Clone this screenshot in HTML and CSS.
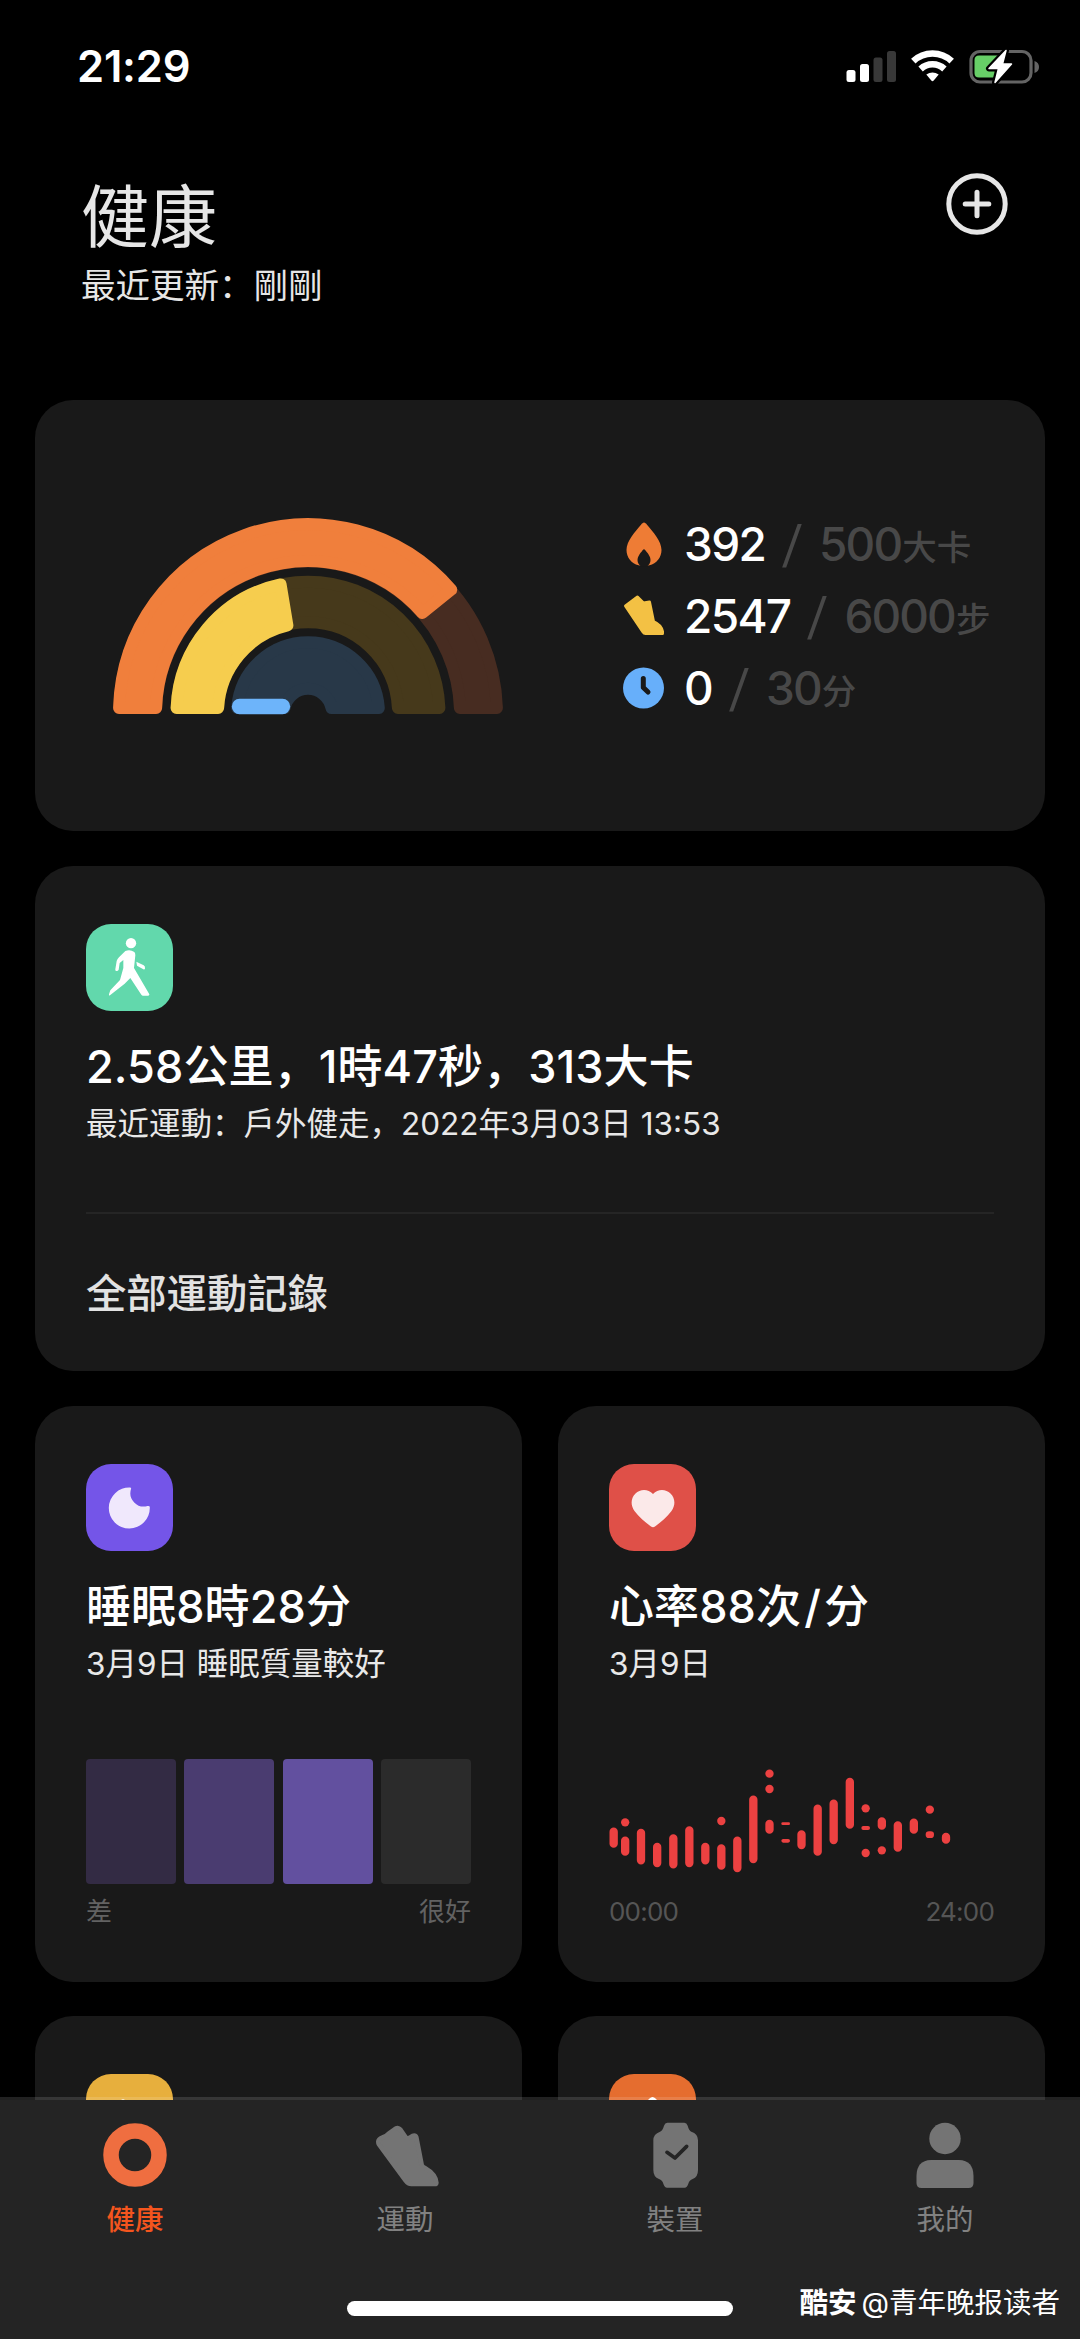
FILE: index.html
```html
<!DOCTYPE html>
<html lang="zh-Hans">
<head>
<meta charset="utf-8">
<title>健康</title>
<link rel="stylesheet" href="styles.css">
</head>
<body>
<div class="screen">
  <main class="content">
    <div class="status">
      <span class="clock">21:29</span>
      <svg class="status-icons" width="194" height="36" viewBox="0 0 194 36">
        <g fill="#fff"><rect x="0.5" y="22" width="9" height="12" rx="2.5"/><rect x="14" y="16" width="9" height="18" rx="2.5"/></g>
        <g fill="#383838"><rect x="27.5" y="9.5" width="9" height="24.500" rx="2.500"/><rect x="41" y="3" width="9" height="31" rx="2.500"/></g>
        <g fill="none" stroke="#fff" stroke-width="6.500">
          <path d="M67.300 13.200A28 28 0 0 1 105.700 13.200"/>
          <path d="M74.600 21A17.500 17.500 0 0 1 98.400 21"/>
        </g>
        <path d="M80.300 26.600Q86.500 22.600 92.700 26.600L87.700 32.600Q86.500 33.800 85.300 32.600Z" fill="#fff"/>
        <rect x="125" y="3.500" width="60" height="30.500" rx="9" fill="none" stroke="#646464" stroke-width="3.200"/>
        <path d="M188.500 13q4.500 1.500 4.500 6t-4.500 6z" fill="#646464"/>
        <path d="M133 7.500H152V29.500H133Q128.500 29.500 128.500 25V12Q128.500 7.500 133 7.500Z" fill="#67ce67"/>
        <path d="M160 2.500L143 20.500H152.500L149 34.500L165.500 16H156.500Z" fill="#fff" stroke="#000" stroke-width="6" stroke-linejoin="round"/>
        <path d="M160 2.500L143 20.500H152.500L149 34.500L165.500 16H156.500Z" fill="#fff" stroke="#fff" stroke-width="1.500" stroke-linejoin="round"/>
      </svg>
    </div>

    <header class="header">
      <div>
        <h1 class="title">健康</h1>
        <p class="updated">最近更新：剛剛</p>
      </div>
      <svg class="add" width="62" height="62" viewBox="0 0 62 62" fill="none" stroke="#e6e6e6" stroke-width="5">
        <circle cx="31" cy="31" r="28.200"/>
        <path d="M31 19.200V42.800M19.200 31H42.800" stroke-linecap="round"/>
      </svg>
    </header>

    <div class="cards">
      <section class="card goals">
        <svg class="gauge" width="392" height="198" viewBox="0 0 392 198" stroke-width="12" stroke-linejoin="round">
          <path fill="#472c21" stroke="#472c21" d="M7.100 191A189 189 0 0 1 384.900 191L347.900 191A152 152 0 0 0 44.100 191Z"/>
          <path fill="#f07f3c" stroke="#f07f3c" d="M7.100 191A189 189 0 0 1 339.200 72.700L310.400 95.950A152 152 0 0 0 44.100 191Z"/>
          <path fill="#46391b" stroke="#46391b" d="M64.600 191A131.500 131.500 0 0 1 327.400 191L285.900 191A90 90 0 0 0 106.100 191Z"/>
          <path fill="#f6cd4e" stroke="#f6cd4e" d="M64.600 191A131.500 131.500 0 0 1 168.600 67.400L175.400 108.400A90 90 0 0 0 106.100 191Z"/>
          <path fill="#283848" stroke="#283848" d="M125.200 191A71 71 0 0 1 266.800 191L219.500 191A24 24 0 0 0 172.500 191Z"/>
          <path fill="none" stroke="#6db4fa" stroke-width="15.400" stroke-linecap="round" d="M127.500 189.500H170.500"/>
        </svg>
        <ul class="stats">
          <li class="stat">
            <svg class="stat-icon" width="42" height="46" viewBox="0 0 42 46"><path fill="#ee7c35" d="M21 1.500C22 1.500 23 2.500 24 3.700C30 11 38.500 20 38.500 29C38.500 36.500 33.500 42.500 26.500 44.300C23 45 19 45 15.500 44.300C8.500 42.500 3.500 36.500 3.500 29C3.500 20 12 11 18 3.700C19 2.500 20 1.500 21 1.500Z"/><path fill="#191919" d="M21 28C24.500 31.500 27.500 35.500 27.500 39C27.500 42 26 44 24 45.500H18C16 44 14.500 42 14.500 39C14.500 35.500 17.500 31.500 21 28Z"/></svg>
            <span class="value">392</span><span class="slash">/</span><span class="goal">500</span><span class="unit">大卡</span>
          </li>
          <li class="stat">
            <svg class="stat-icon" width="42" height="46" viewBox="0 0 42 46"><path fill="#f3c144" stroke="#f3c144" stroke-width="3" stroke-linejoin="round" d="M2.500 13L14.500 4L20.500 10L26.500 9L30.500 28.500Q38.500 32 39.500 38.500V40.500H22.500Q21 40.500 20 39Z"/></svg>
            <span class="value">2547</span><span class="slash">/</span><span class="goal">6000</span><span class="unit">步</span>
          </li>
          <li class="stat">
            <svg class="stat-icon" width="42" height="46" viewBox="0 0 42 46"><circle cx="20.500" cy="23" r="20.500" fill="#67affa"/><path d="M20.300 13.500V22.500L25 27" fill="none" stroke="#191919" stroke-width="5" stroke-linecap="round" stroke-linejoin="round"/></svg>
            <span class="value">0</span><span class="slash">/</span><span class="goal">30</span><span class="unit">分</span>
          </li>
        </ul>
      </section>

      <section class="card workout">
        <div class="badge walk">
          <svg width="87" height="87" viewBox="18 26 261 261" fill="#fff">
            <circle cx="153" cy="83.500" r="15.500"/>
            <path d="M136 107Q150 101 163 110Q166 113 166 120L162 158L208 237Q209 240 205 241H189Q186 241 184 238L151 188L134 205L90 240Q86 242 87 237L91 225L120 194L130 158V134L119 143L116 163Q114 168 108 167Q105 166 106 162L110 137Q112 131 117 126Z"/>
            <path d="M169 139L191 150Q196 153 195 160Q194 163 190 162L171 151Z"/>
          </svg>
        </div>
        <h2 class="headline">2.58公里，1時47秒，313大卡</h2>
        <p class="detail">最近運動：戶外健走，2022年3月03日 13:53</p>
        <a class="all-records">全部運動記錄</a>
      </section>

      <div class="grid">
        <section class="card">
          <div class="badge sleep">
            <svg width="87" height="87" viewBox="0 0 87 87"><path fill="#f0e8fc" d="M44 23.500Q45.500 23.500 45 25A13.500 13.500 0 0 0 61.500 42Q64 41.500 63.800 43.500A20.500 20.500 0 1 1 44 23.500Z"/></svg>
          </div>
          <h2 class="headline">睡眠8時28分</h2>
          <p class="detail">3月9日 睡眠質量較好</p>
          <div class="chart levels"><i class="level poor"></i><i class="level fair"></i><i class="level good"></i><i class="level best"></i></div>
          <div class="labels"><span>差</span><span>很好</span></div>
        </section>
        <section class="card">
          <div class="badge heart">
            <svg width="87" height="87" viewBox="0 0 87 87"><path fill="#fbe9e9" d="M44 30C49 24.500 57 25 61.500 29.500C66.500 34.500 66.500 41.500 62.500 47C58 53 51.500 58.500 46 62.500Q44 64 42 62.500C36.500 58.500 30 53 25.500 47C21.500 41.500 21.500 34.500 26.500 29.500C31 25 39 24.500 44 30Z"/></svg>
          </div>
          <h2 class="headline">心率88次<span class="per">/</span>分</h2>
          <p class="detail">3月9日</p>
          <div class="chart pulse">
            <svg width="385" height="115" viewBox="57 45 1155 345" fill="#ec4141">
              <path fill="none" stroke="#ec4141" stroke-width="25" stroke-linecap="round" d="M71 245V281M105.500 272V305M153 249V331M201.500 291V339M250 265V343M298 241V339M346 291V331M394 295V347M442 272V354M490 149V327M538.500 222V239M634.500 253V285M683 176V305M731 161V270M779.500 96V224M875.500 214V227M923.500 226V293M971.500 218V239M1068 261V269"/>
              <circle cx="105.500" cy="217" r="12.500"/><circle cx="394" cy="213" r="12.500"/>
              <circle cx="538.500" cy="71" r="12.500"/><circle cx="538.500" cy="117" r="12.500"/>
              <rect x="574" y="217" width="26" height="8" rx="4"/><rect x="574" y="267" width="26" height="11" rx="5.500"/>
              <circle cx="827" cy="175" r="12.500"/><rect x="814" y="228" width="26" height="12" rx="6"/><circle cx="827" cy="309" r="12.500"/>
              <circle cx="875.500" cy="301" r="12.500"/>
              <circle cx="1019.500" cy="179" r="12.500"/><rect x="1007" y="244" width="25" height="20" rx="10"/>
            </svg>
          </div>
          <div class="labels times"><span>00:00</span><span>24:00</span></div>
        </section>
        <section class="card">
          <div class="badge steps"><svg width="87" height="87" viewBox="0 0 87 87"><path fill="#fff" d="M23 38L34 27Q37 23.500 40 27L47 35L53 34L56 48L66 60H44Z"/></svg></div>
        </section>
        <section class="card">
          <div class="badge energy"><svg width="87" height="87" viewBox="0 0 87 87"><path fill="#fff" d="M40.500 24.500Q43.500 21.500 46.500 24.500C54 32 62 40 62 48A18 18 0 0 1 26 48C26 40 33 32 40.500 24.500Z"/></svg></div>
        </section>
      </div>
    </div>
  </main>

  <nav class="tabbar">
    <div class="tabs">
      <a class="tab active">
        <svg width="68" height="68" viewBox="0 0 68 68"><circle cx="34" cy="34" r="24" fill="none" stroke="#ef6e40" stroke-width="15.500"/></svg>
        <span>健康</span>
      </a>
      <a class="tab">
        <svg width="68" height="68" viewBox="33 31 204 204"><path fill="#747474" stroke="#747474" stroke-width="14" stroke-linejoin="round" d="M55 93Q55 85 68 80Q76 79 87 68L104 56Q113 48 121 57L137 80Q143 86 151 80Q165 70 169 80L185 163Q187 168 196 173Q227 191 229 216Q229 220 224 220H154Q144 220 138 211L57 101Q55 98 55 93Z"/></svg>
        <span>運動</span>
      </a>
      <a class="tab">
        <svg width="68" height="68" viewBox="843 31 204 204"><path fill="#747474" d="M922 36H973Q980 36 983 45Q987 60 994 63Q1014 69 1014 89V178Q1014 199 998 205Q988 208 985 219Q981 231 974 231H921Q914 231 910 219Q907 208 897 205Q880 199 880 178V89Q880 70 900 63Q908 60 912 45Q915 36 922 36Z"/><path d="M921 125L945 142L980 107" fill="none" stroke="#242424" stroke-width="11" stroke-linecap="round" stroke-linejoin="round"/></svg>
        <span>裝置</span>
      </a>
      <a class="tab">
        <svg width="68" height="68" viewBox="0 0 68 68" fill="#747474"><circle cx="34" cy="17.500" r="15.700"/><path d="M20 39H48Q62.500 39.500 62.500 55V62Q62.500 67 57.500 67H10.500Q5.500 67 5.500 62V55Q5.500 39.500 20 39Z"/></svg>
        <span>我的</span>
      </a>
    </div>
    <div class="home-indicator"></div>
    <div class="watermark"><b>酷安</b><span>@青年晚报读者</span></div>
  </nav>
</div>
</body>
</html>
```
FILE: styles.css
```css
* { box-sizing: border-box; margin: 0; padding: 0; }

body {
  background: #000;
  color: #fff;
  font-family: "Inter", "Noto Sans CJK SC", sans-serif;
}

svg { display: block; flex: none; }

.screen {
  width: 1080px;
  height: 2339px;
  display: flex;
  flex-direction: column;
  overflow: hidden;
}

.content { flex: 1; min-height: 0; overflow: hidden; }

/* status bar */
.status {
  height: 132px;
  padding: 0 40px 0 77px;
  display: flex;
  align-items: center;
  justify-content: space-between;
}
.clock { font-size: 43.500px; font-weight: 600; letter-spacing: -0.200px; line-height: 50px; }

/* page header */
.header {
  height: 268px;
  padding: 41px 72px 0 81px;
  display: flex;
  justify-content: space-between;
  align-items: flex-start;
  color: #e6e6e6;
}
.title { font-size: 68px; font-weight: 400; line-height: 84px; padding-top: 2px; }
.updated { font-size: 34.500px; font-weight: 400; line-height: 44px; margin-top: 5px; }

/* cards */
.cards { padding: 0 35px; display: flex; flex-direction: column; gap: 35px; }
.card { background: #191919; border-radius: 38px; padding: 58px 51px 50px; }

.goals {
  height: 431px;
  padding: 0 0 0 77px;
  display: flex;
  align-items: center;
}
.stats { list-style: none; margin-left: 119px; }
.stat { height: 72px; display: flex; align-items: center; line-height: 72px; white-space: nowrap; }
.stat-icon { margin-right: 19px; }
.value { font-size: 46px; font-weight: 500; letter-spacing: -1.700px; }
.slash { font-size: 50px; color: #484848; width: 54px; text-align: center; transform: skewX(-5deg); }
.goal { font-size: 46px; font-weight: 500; color: #484848; letter-spacing: -1.900px; }
.unit { font-size: 34.500px; font-weight: 500; color: #484848; padding: 8px 0 0 1px; }

.badge { width: 87px; height: 87px; border-radius: 25px; overflow: hidden; }
.walk { background: #62d8ac; }
.sleep { background: #7455e8; }
.heart { background: #df5048; }
.steps { background: #e7af3d; }
.energy { background: #e56d2f; }

.headline { font-size: 45px; font-weight: 500; line-height: 56px; margin-top: 28px; white-space: nowrap; letter-spacing: 0.100px; }
.per { padding: 0 3px; }
.detail { font-size: 31.500px; line-height: 44px; height: 44px; margin-top: 7px; color: #e8e8e8; white-space: nowrap; }
.all-records {
  display: block;
  margin-top: 66px;
  padding-top: 52px;
  border-top: 2px solid #252525;
  color: #e2e2e2;
  font-size: 40.300px;
  font-weight: 500;
  line-height: 56px;
}
.workout { height: 505px; }

.grid { display: grid; grid-template-columns: 487px 487px; gap: 34px 36px; grid-template-rows: 576px 576px; }

.chart { height: 125px; margin-top: 73px; }
.levels { display: grid; grid-template-columns: repeat(4, 1fr); gap: 8.500px; }
.level { border-radius: 4px; }
.poor { background: #332b44; }
.fair { background: #4a3c70; }
.good { background: #62509f; }
.best { background: #2b2b2b; }
.pulse { padding-top: 6px; }
.labels { display: flex; justify-content: space-between; margin-top: 10px; color: #626262; font-size: 26px; line-height: 36px; }
.times { color: #555; letter-spacing: -0.800px; }

/* tab bar */
.tabbar { position: relative; height: 239px; background: #242424; }
.tabbar::before {
  content: "";
  position: absolute;
  left: 0;
  right: 0;
  top: -3px;
  height: 3px;
  background: rgba(255, 255, 255, 0.13);
}
.tabs { display: grid; grid-template-columns: repeat(4, 1fr); padding-top: 21px; }
.tab { display: flex; flex-direction: column; align-items: center; color: #818181; font-size: 28.500px; line-height: 40px; }
.tab span { margin-top: 11px; }
.active { color: #f4551e; font-weight: 500; }
.home-indicator {
  width: 386px;
  height: 15px;
  margin: 61px auto 0;
  border-radius: 8px;
  background: #fff;
}
.watermark {
  position: absolute;
  right: 20px;
  bottom: 16px;
  display: flex;
  gap: 5px;
  font-size: 28.500px;
  line-height: 40px;
}
.watermark b { font-weight: 700; }
```
